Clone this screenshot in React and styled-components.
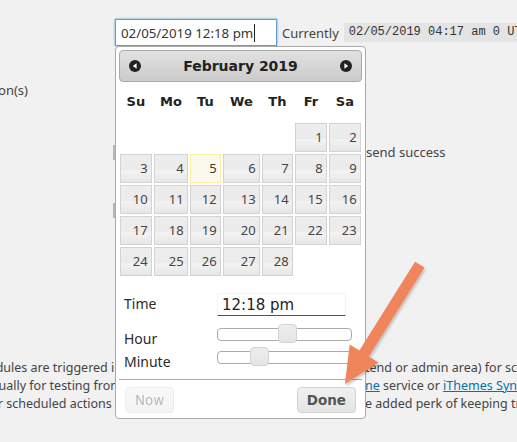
import React from 'react';
import styled, { createGlobalStyle } from 'styled-components';

const GlobalStyle = createGlobalStyle`
  html, body {
    margin: 0;
    padding: 0;
    background: #f1f1f1;
  }
  body {
    overflow: hidden;
    font-family: "Noto Sans", "Open Sans", sans-serif;
    color: #444;
  }
`;

const Page = styled.div`
  position: relative;
  width: 517px;
  height: 442px;
  overflow: hidden;
  padding-top: 19px;
  box-sizing: border-box;
`;

const TopRow = styled.div`
  display: flex;
  align-items: center;
  margin-left: 115px;
  height: 27px;
  white-space: nowrap;

  & > * {
    flex-shrink: 0;
  }
`;

const DateInput = styled.div`
  box-sizing: border-box;
  display: flex;
  align-items: center;
  width: 162px;
  height: 27px;
  padding-left: 5px;
  border: 1px solid #5b9dd9;
  box-shadow: 0 0 2px rgba(30, 140, 190, 0.8);
  background: #fff;
  font-size: 13.3px;
  color: #32373c;
`;

const Caret = styled.span`
  width: 1px;
  height: 18px;
  margin-left: 1px;
  background: #222;
`;

const Currently = styled.span`
  margin-left: 5px;
  font-size: 13px;
`;

const Code = styled.code`
  margin-left: 5px;
  padding: 2px 5px;
  background: #e4e4e4;
  font-family: "Liberation Mono", monospace;
  font-size: 12px;
  line-height: 15.5px;
  color: #333;
`;

const CutLabel = styled.div`
  display: flex;
  justify-content: flex-end;
  width: 28px;
  margin-top: 36px;
  font-size: 13px;
  line-height: 16px;
  white-space: nowrap;
`;

const FieldRow = styled.div`
  display: flex;
  align-items: center;
  margin-top: ${(p) => p.$top}px;
  margin-left: 113px;
  height: 16px;
  font-size: 13px;
  white-space: nowrap;
`;

const FieldEdge = styled.span`
  width: 2px;
  height: 15px;
  background: #b4b9be;
`;

const FieldText = styled.span`
  margin-left: 251px;
`;

const Paragraph = styled.div`
  margin-top: 141px;
  font-size: 12.5px;
  line-height: 17.75px;
`;

const Line = styled.div`
  display: grid;
  grid-template-columns: 122px 1fr;
  column-gap: 243px;
  white-space: nowrap;
`;

const LeftPart = styled.span`
  display: flex;
  justify-content: flex-end;
  overflow: hidden;
`;

const RightPart = styled.span``;

const Link = styled.a`
  color: #0073aa;
  text-decoration: underline;
`;

const Accent = styled.span`
  color: #e08a3c;
`;

/* datepicker popup */

const Picker = styled.div`
  position: absolute;
  left: 115px;
  top: 46px;
  box-sizing: border-box;
  width: 251px;
  padding: 3px;
  border: 1px solid #aaa;
  border-radius: 4px;
  background: #fff;
  font-family: "DejaVu Sans", Verdana, sans-serif;
  color: #222;
`;

const Header = styled.div`
  box-sizing: border-box;
  display: flex;
  align-items: center;
  justify-content: space-between;
  height: 32px;
  padding: 0 9px;
  border: 1px solid #aaa;
  border-radius: 4px;
  background: linear-gradient(to bottom, #e1e1e1 0%, #d6d6d6 50%, #cbcbcb 100%);
`;

const Title = styled.span`
  font-size: 14px;
  font-weight: bold;
  color: #222;
`;

const NavIcon = ({ dir }) => (
  <svg width="12" height="12" viewBox="0 0 12 12">
    <circle cx="6" cy="6" r="6" fill="#222" />
    {dir === 'prev' ? (
      <polygon points="7.6,3.2 3.8,6 7.6,8.8" fill="#fff" />
    ) : (
      <polygon points="4.4,3.2 8.2,6 4.4,8.8" fill="#fff" />
    )}
  </svg>
);

const Calendar = styled.div`
  display: grid;
  grid-template-columns: 31.7px 33.4px 30.4px 36.4px 30.4px 31.4px 31.4px;
  grid-template-rows: 39px repeat(5, 29px);
  column-gap: 2.6px;
  row-gap: 2px;
  margin-left: 1px;
`;

const DayName = styled.div`
  display: flex;
  align-items: center;
  justify-content: center;
  font-size: 13px;
  font-weight: bold;
  color: #222;
`;

const DayCell = styled.div`
  box-sizing: border-box;
  padding-right: 3px;
  border: 1px solid ${(p) => (p.$today ? '#fcefa1' : '#d3d3d3')};
  background: ${(p) =>
    p.$today
      ? '#fbf9ee'
      : 'linear-gradient(to bottom, #ededed 0%, #ebebeb 55%, #f3f3f3 58%, #e6e6e6 100%)'};
  font-family: "Noto Sans", "Open Sans", sans-serif;
  font-size: 13px;
  line-height: 27px;
  text-align: right;
  color: ${(p) => (p.$today ? '#363636' : '#454545')};
`;

const TimeGrid = styled.div`
  display: grid;
  grid-template-columns: 98px 135px;
  grid-template-rows: 25px 13px 13px;
  row-gap: 10px;
  padding-top: 17px;
`;

const TimeLabel = styled.div`
  padding-left: 5px;
  margin-top: 1px;
  font-family: "Noto Sans", "Open Sans", sans-serif;
  font-size: 14px;
  line-height: 20px;
  color: #2a2a2a;
`;

const TimeValue = styled.div`
  box-sizing: border-box;
  width: 129px;
  height: 23px;
  padding-left: 4px;
  border: 1px solid #f2f2f2;
  border-bottom: 1px solid #555;
  font-size: 15px;
  line-height: 22px;
  color: #222;
`;

const Track = styled.div`
  position: relative;
  box-sizing: border-box;
  height: 13px;
  border: 1px solid #aaa;
  border-radius: 4px;
  background: #fff;
`;

const Handle = styled.span`
  position: absolute;
  top: -5px;
  box-sizing: border-box;
  width: 19px;
  height: 19px;
  margin-left: -9px;
  border: 1px solid #d3d3d3;
  border-radius: 4px;
  background: linear-gradient(to bottom, #ededed 0%, #e9e9e9 55%, #e3e3e3 100%);
`;

const Slider = ({ value, max }) => (
  <Track>
    <Handle style={{ left: `${(value / max) * 100}%` }} />
  </Track>
);

const ButtonPane = styled.div`
  display: flex;
  justify-content: space-between;
  margin-top: 15px;
  padding: 7px 6px 2px;
  border-top: 1px solid #aaa;
`;

const PaneButton = styled.button`
  box-sizing: border-box;
  height: 26px;
  padding: 0 9px;
  border: 1px solid #d3d3d3;
  border-radius: 4px;
  background: linear-gradient(to bottom, #f0f0f0 0%, #eaeaea 55%, #e3e3e3 100%);
  font-family: "DejaVu Sans", Verdana, sans-serif;
  font-size: 13.5px;
  font-weight: ${(p) => (p.$primary ? 'bold' : 'normal')};
  color: #555;
  opacity: ${(p) => (p.disabled ? 0.4 : 1)};
`;

const Overlay = styled.svg`
  position: absolute;
  left: 0;
  top: 0;
  pointer-events: none;
`;

const dayNames = ['Su', 'Mo', 'Tu', 'We', 'Th', 'Fr', 'Sa'];
const days = [
  null, null, null, null, null, 1, 2,
  3, 4, 5, 6, 7, 8, 9,
  10, 11, 12, 13, 14, 15, 16,
  17, 18, 19, 20, 21, 22, 23,
  24, 25, 26, 27, 28, null, null,
];

const App = () => (
  <>
    <GlobalStyle />
    <Page>
      <TopRow>
        <DateInput>
          02/05/2019 12:18 pm
          <Caret />
        </DateInput>
        <Currently>Currently</Currently>
        <Code>02/05/2019 04:17 am 0 UTC</Code>
      </TopRow>

      <CutLabel>on(s)</CutLabel>

      <FieldRow $top={46}>
        <FieldEdge />
        <FieldText>send success</FieldText>
      </FieldRow>
      <FieldRow $top={42}>
        <FieldEdge />
      </FieldRow>

      <Paragraph>
        <Line>
          <LeftPart>dules are triggered in</LeftPart>
          <RightPart>tend or admin area) for schedules</RightPart>
        </Line>
        <Line>
          <LeftPart>ually for testing from</LeftPart>
          <RightPart>
            <Link>ne</Link> service or <Link>iThemes Sync</Link> with
          </RightPart>
        </Line>
        <Line>
          <LeftPart>
            r scheduled actions&nbsp;<Accent>e</Accent>
          </LeftPart>
          <RightPart>e added perk of keeping track</RightPart>
        </Line>
      </Paragraph>

      <Picker>
        <Header>
          <NavIcon dir="prev" />
          <Title>February 2019</Title>
          <NavIcon dir="next" />
        </Header>
        <Calendar>
          {dayNames.map((d) => (
            <DayName key={d}>{d}</DayName>
          ))}
          {days.map((d, i) =>
            d ? (
              <DayCell key={i} $today={d === 5}>
                {d}
              </DayCell>
            ) : (
              <span key={i} />
            )
          )}
        </Calendar>
        <TimeGrid>
          <TimeLabel>Time</TimeLabel>
          <TimeValue>12:18 pm</TimeValue>
          <TimeLabel>Hour</TimeLabel>
          <Slider value={12} max={23} />
          <TimeLabel>Minute</TimeLabel>
          <Slider value={18} max={59} />
        </TimeGrid>
        <ButtonPane>
          <PaneButton disabled>Now</PaneButton>
          <PaneButton $primary>Done</PaneButton>
        </ButtonPane>
      </Picker>

      <Overlay width="517" height="442" viewBox="0 0 517 442">
        <defs>
          <filter id="arrowShadow" x="-20%" y="-20%" width="140%" height="140%">
            <feDropShadow dx="1" dy="2" stdDeviation="1.5" floodColor="#000" floodOpacity="0.25" />
          </filter>
        </defs>
        <polygon
          points="424.5,267.5 368.8,356.4 378.5,362.5 345,384 349.7,344.5 359.4,350.6 415.1,261.7"
          fill="#f0845a"
          filter="url(#arrowShadow)"
        />
      </Overlay>
    </Page>
  </>
);

export default App;
